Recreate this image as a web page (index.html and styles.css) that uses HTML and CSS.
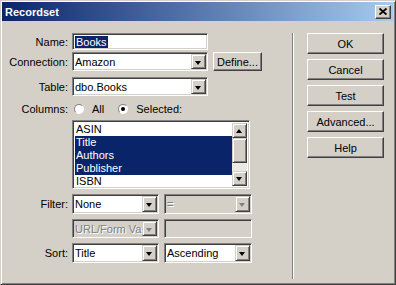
FILE: index.html
```html
<!DOCTYPE html>
<html lang="en">
<head>
  <meta charset="UTF-8">
  <title>Recordset</title>
  <link rel="stylesheet" href="styles.css">
</head>
<body>
  <div class="window">
    <div class="titlebar">
      <span class="title">Recordset</span>
      <span class="close">
        <svg width="8" height="7" viewBox="0 0 8 7"><path d="M0.5 0.5 L7.5 6.5 M7.5 0.5 L0.5 6.5" stroke="#000" stroke-width="1.8"/></svg>
      </span>
    </div>
    <div class="body">
      <div class="form">
        <div class="row row-name">
          <span class="lbl">Name:</span>
          <span class="field w-wide"><span class="sel-text">Books</span></span>
        </div>
        <div class="row row-conn">
          <span class="lbl">Connection:</span>
          <span class="field combo w-wide"><span class="val">Amazon</span><span class="arrow"></span></span>
          <span class="btn btn-define">Define...</span>
        </div>
        <div class="row row-table">
          <span class="lbl">Table:</span>
          <span class="field combo w-wide"><span class="val">dbo.Books</span><span class="arrow"></span></span>
        </div>
        <div class="row row-cols">
          <span class="lbl">Columns:</span>
          <span class="radio"></span><span class="opt opt-all">All</span>
          <span class="radio checked"></span><span class="opt">Selected:</span>
        </div>
        <div class="row row-list">
          <span class="lbl"></span>
          <div class="field listbox">
            <ul class="items">
              <li>ASIN</li>
              <li class="on">Title</li>
              <li class="on">Authors</li>
              <li class="on">Publisher</li>
              <li>ISBN</li>
            </ul>
            <div class="scrollbar">
              <span class="sb-btn"><span class="tri up"></span></span>
              <span class="sb-thumb"></span>
              <span class="sb-track"></span>
              <span class="sb-btn"><span class="tri"></span></span>
            </div>
          </div>
        </div>
        <div class="row row-filter">
          <span class="lbl">Filter:</span>
          <span class="field combo w-half"><span class="val">None</span><span class="arrow"></span></span>
          <span class="field combo w-half2 disabled"><span class="val">=</span><span class="arrow"></span></span>
        </div>
        <div class="row row-url">
          <span class="lbl"></span>
          <span class="field combo w-half disabled"><span class="val">URL/Form Variable</span><span class="arrow"></span></span>
          <span class="field w-half2 disabled"></span>
        </div>
        <div class="row row-sort">
          <span class="lbl">Sort:</span>
          <span class="field combo w-half"><span class="val">Title</span><span class="arrow"></span></span>
          <span class="field combo w-half2"><span class="val">Ascending</span><span class="arrow"></span></span>
        </div>
      </div>
      <div class="sep"></div>
      <div class="buttons">
        <span class="btn">OK</span>
        <span class="btn">Cancel</span>
        <span class="btn">Test</span>
        <span class="btn">Advanced...</span>
        <span class="btn">Help</span>
      </div>
    </div>
  </div>
</body>
</html>
```

FILE: styles.css
```css
body {
  margin: 0;
  font-family: "Liberation Sans", Arial, sans-serif;
  font-size: 11px;
  color: #000;
  background: #d4d0c8;
}

.window {
  width: 396px;
  height: 285px;
  box-sizing: border-box;
  background: #d4d0c8;
  border: 1px solid;
  border-color: #d4d0c8 #404040 #404040 #d4d0c8;
  box-shadow: inset 1px 1px #fff, inset -1px -1px #808080;
  padding: 1px 2px 2px 1px;
  display: flex;
  flex-direction: column;
}

.titlebar {
  height: 19px;
  flex: none;
  background: linear-gradient(to right, #0a246a, #a6caf0);
  display: flex;
  align-items: center;
  justify-content: space-between;
  padding: 0 2px 0 3px;
}

.title {
  color: #fff;
  font-weight: bold;
}

.close {
  width: 16px;
  height: 14px;
  box-sizing: border-box;
  background: #d4d0c8;
  border: 1px solid;
  border-color: #fff #404040 #404040 #fff;
  box-shadow: inset -1px -1px #808080;
  display: flex;
  align-items: center;
  justify-content: center;
}

.body {
  flex: 1;
  display: flex;
  padding: 12px 0 3px 1px;
}

.form {
  width: 289px;
}

.row {
  display: flex;
  align-items: center;
}

.lbl {
  width: 65px;
  margin-right: 4px;
  text-align: right;
  flex: none;
}

.row-name { height: 17px; }
.row-conn { height: 19px; margin-top: 2px; }
.row-table { height: 19px; margin-top: 6px; }
.row-cols { height: 14px; margin-top: 6px; }
.row-list { height: 69px; margin-top: 4px; align-items: stretch; }
.row-filter { height: 20px; margin-top: 5px; }
.row-url { height: 19px; margin-top: 5px; }
.row-sort { height: 20px; margin-top: 5px; }

.field {
  position: relative;
  height: 100%;
  box-sizing: border-box;
  background: #fff;
  border: 1px solid;
  border-color: #808080 #fff #fff #808080;
  box-shadow: inset 1px 1px #404040, inset -1px -1px #d4d0c8;
  padding: 0 2px;
  display: flex;
  align-items: center;
  overflow: hidden;
  white-space: nowrap;
}

.w-wide { width: 136px; }
.w-half { width: 87px; }
.w-half2 { width: 88px; margin-left: 5px; }

.sel-text {
  background: #0a246a;
  color: #fff;
  padding: 0 1px;
}

.combo .val {
  flex: 1;
  overflow: hidden;
}

.arrow {
  position: absolute;
  top: 1px;
  right: 1px;
  bottom: 1px;
  width: 15px;
  box-sizing: border-box;
  background: #d4d0c8;
  border: 1px solid;
  border-color: #d4d0c8 #404040 #404040 #d4d0c8;
  box-shadow: inset 1px 1px #fff, inset -1px -1px #808080;
}

.arrow::after {
  content: "";
  position: absolute;
  left: 3px;
  top: 6px;
  border-style: solid;
  border-width: 4px 3.5px 0;
  border-color: #000 transparent transparent;
}

.disabled {
  background: #d4d0c8;
  color: #808080;
  text-shadow: 1px 1px #fff;
}

.disabled .arrow::after {
  border-top-color: #808080;
}

.btn {
  box-sizing: border-box;
  background: #d4d0c8;
  border: 1px solid;
  border-color: #fff #404040 #404040 #fff;
  box-shadow: inset -1px -1px #808080;
  display: flex;
  align-items: center;
  justify-content: center;
}

.btn-define {
  width: 49px;
  height: 19px;
  margin-left: 5px;
}

.radio {
  width: 10px;
  height: 10px;
  box-sizing: border-box;
  border-radius: 50%;
  background: #fff;
  border: 1px solid;
  border-color: #808080 #fff #fff #808080;
  margin-left: 2px;
  position: relative;
}

.radio.checked::after {
  content: "";
  position: absolute;
  left: 2px;
  top: 2px;
  width: 4px;
  height: 4px;
  border-radius: 50%;
  background: #000;
}

.opt {
  margin-left: 8px;
}

.opt-all {
  margin-right: 12px;
}

.listbox {
  width: 178px;
  padding: 2px 2px 2px 2px;
  align-items: stretch;
}

.items {
  list-style: none;
  margin: 0;
  padding: 0;
  flex: 1;
}

.items li {
  height: 13px;
  line-height: 13px;
  padding-left: 1px;
}

.items li.on {
  background: #0a246a;
  color: #fff;
}

.scrollbar {
  width: 15px;
  display: flex;
  flex-direction: column;
}

.sb-btn {
  position: relative;
  height: 15px;
  flex: none;
  box-sizing: border-box;
  background: #d4d0c8;
  border: 1px solid;
  border-color: #d4d0c8 #404040 #404040 #d4d0c8;
  box-shadow: inset 1px 1px #fff, inset -1px -1px #808080;
}

.sb-thumb {
  height: 25px;
  flex: none;
  box-sizing: border-box;
  background: #d4d0c8;
  border: 1px solid;
  border-color: #d4d0c8 #404040 #404040 #d4d0c8;
  box-shadow: inset 1px 1px #fff, inset -1px -1px #808080;
}

.sb-track {
  flex: 1;
  background: #ebe9e5;
}

.tri {
  position: absolute;
  left: 3px;
  top: 5px;
  border-style: solid;
  border-width: 4px 3.5px 0;
  border-color: #000 transparent transparent;
}

.tri.up {
  border-width: 0 3.5px 4px;
  border-color: transparent transparent #000;
}

.sep {
  width: 1px;
  border-right: 1px solid #fff;
  background: #808080;
}

.buttons {
  width: 77px;
  margin-left: 13px;
  display: flex;
  flex-direction: column;
  gap: 5px;
}

.buttons .btn {
  height: 21px;
}
```
